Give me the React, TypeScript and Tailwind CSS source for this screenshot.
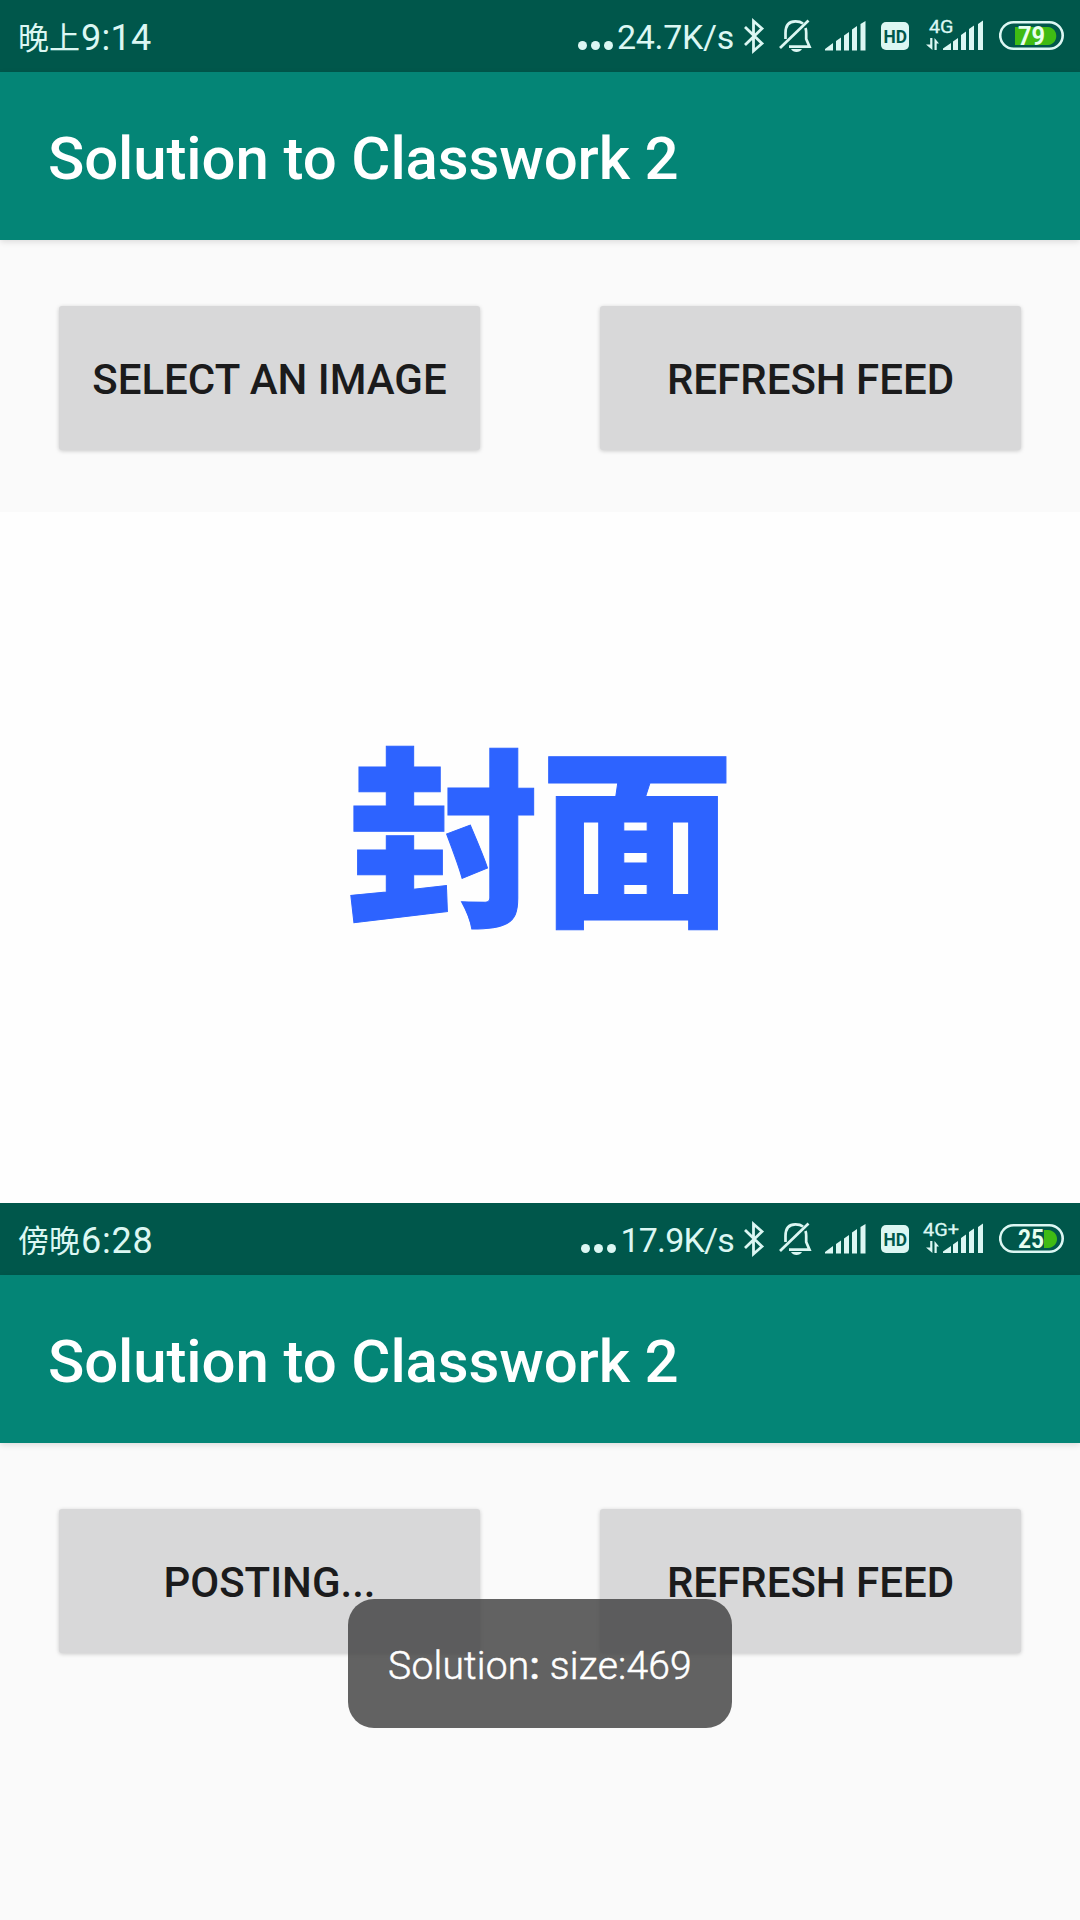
import React from "react";

function Bluetooth() {
  return (
    <svg className="ml-[9px] h-[72px] w-[22px] shrink-0" viewBox="0 0 22 72" fill="none" stroke="currentColor" strokeWidth="2.8">
      <path d="M2 27L19 43.5L10.5 51V21L19 28.5L2 45" />
    </svg>
  );
}

function MutedBell() {
  return (
    <svg className="ml-[14px] h-[72px] w-[34px] shrink-0" viewBox="0 0 34 72" fill="none" stroke="currentColor" strokeWidth="2.7">
      <path d="M6.500 39V33C6.500 25 10.500 21.300 16.500 21.300C19.500 21.300 22 22 24 23.500M26.500 28C27 29.500 27.200 31 27.200 33V39L30.500 46.700H10" />
      <path d="M1 48L29.500 20.500" />
      <path d="M12 49H23C21 53 14 53 12 49Z" fill="currentColor" stroke="none" />
    </svg>
  );
}

function Bars({ className }: { className: string }) {
  return (
    <svg className={className} viewBox="0 0 41 30" fill="currentColor">
      <path d="M0 29.500V28L8 22V29.500ZM11 20L16 16.500V29.500H11ZM19 14.500L24 11V29.500H19ZM27 8.500L32 5V29.500H27ZM35.500 3L40.500 0V29.500H35.500Z" />
    </svg>
  );
}

function Hd() {
  return (
    <svg className="ml-[15px] h-7 w-7 shrink-0" viewBox="0 0 28 28">
      <rect width="28" height="28" rx="5" fill="#dcf7f3" />
      <text x="2.500" y="20.500" fontFamily="Roboto" fontWeight="700" fontSize="18" textLength="23.500" lengthAdjust="spacingAndGlyphs" fill="#00574b">
        HD
      </text>
    </svg>
  );
}

function Mobile({ label }: { label: string }) {
  const plus = label.length > 2;
  return (
    <svg className="ml-[13px] h-[72px] w-[62px] shrink-0" viewBox="0 0 62 72" fill="currentColor">
      <text x={plus ? 1 : 7} y="33" fontFamily="Roboto" fontSize="18.500" textLength={plus ? 36 : 24.500} lengthAdjust="spacingAndGlyphs" stroke="currentColor" strokeWidth="0.300">
        {label}
      </text>
      <path d="M8.200 38H10.400V50L4 44.500H8.200ZM12.500 50V38L17 43.500H14.700V50Z" />
      <path d="M21 50V48.500L29 43V50ZM31 41.500L36 38V50H31ZM39 35L44 31.500V50H39ZM47 29L52 25.500V50H47ZM56 24L61 20.500V50H56Z" />
    </svg>
  );
}

function Battery({ level }: { level: string }) {
  const low = level === "25";
  return (
    <svg className="ml-[15px] h-[72px] w-[65px] shrink-0" viewBox="0 0 65 72">
      <rect x="1.200" y="22.200" width="62.500" height="26.600" rx="13.300" fill="none" stroke="#dcf7f3" strokeWidth="2.600" />
      {low ? (
        <path d="M45 27H49C61 28 61 44 49 45H45Z" fill="#3fbb13" />
      ) : (
        <path d="M16 27H49C60 28 60 44 49 45H16Z" fill="#3fbb13" />
      )}
      <text x={low ? 19 : 19} y="44.700" fontFamily="Roboto" fontWeight="700" fontSize="25.500" textLength={low ? 26 : 27} lengthAdjust="spacingAndGlyphs" fill="#e8fff0">
        {level}
      </text>
    </svg>
  );
}

interface StatusProps {
  period: string;
  time: string;
  timeClass: string;
  speed: string;
  speedClass: string;
  network: string;
  battery: string;
}

function StatusBar({ period, time, timeClass, speed, speedClass, network, battery }: StatusProps) {
  return (
    <header className="flex h-[72px] shrink-0 items-center bg-[#00574b] pr-[16px] pl-[18px] text-[#dcf7f3]">
      <div className="flex items-center leading-none whitespace-nowrap">
        <span className="mt-[-1px] font-['Noto_Sans_CJK_SC',sans-serif] text-[31px]">{period}</span>
        <span className={timeClass}>{time}</span>
      </div>
      <div className="ml-auto flex items-center">
        <div className="mt-[19px] mr-[4px] flex gap-[4px]">
          <i className="h-[9px] w-[9px] rounded-full bg-current" />
          <i className="h-[9px] w-[9px] rounded-full bg-current" />
          <i className="h-[9px] w-[9px] rounded-full bg-current" />
        </div>
        <span className={speedClass}>{speed}</span>
        <Bluetooth />
        <MutedBell />
        <Bars className="ml-[12px] h-[30px] w-[41px] shrink-0" />
        <Hd />
        <Mobile label={network} />
        <Battery level={battery} />
      </div>
    </header>
  );
}

function AppBar() {
  return (
    <div className="flex h-[168px] shrink-0 items-center bg-[#048576] pt-[5px] pl-[48px] shadow-[0_2px_6px_rgba(0,0,0,0.12)]">
      <h1 className="font-['Roboto'] text-[60px] leading-none font-medium tracking-[-0.13px] whitespace-nowrap text-white">
        Solution to Classwork 2
      </h1>
    </div>
  );
}

function ActionButton({ children }: { children: React.ReactNode }) {
  return (
    <button className="flex h-[144px] w-[421px] items-center justify-center rounded-[3px] bg-[#d8d8d9] pt-[4px] font-['Roboto'] text-[42px] leading-none font-medium whitespace-nowrap text-[#1b1b1c] shadow-[0_1px_4px_rgba(0,0,0,0.2)]">
      {children}
    </button>
  );
}

export default function App() {
  return (
    <div className="flex h-[1920px] w-[1080px] flex-col overflow-hidden bg-[#fafafa]">
      <section className="flex h-[1203px] shrink-0 flex-col">
        <StatusBar
          period="晚上"
          time="9:14"
          timeClass="mt-[3px] ml-[1px] font-['Roboto'] text-[36px] tracking-[0.3px]"
          speed="24.7K/s"
          speedClass="mt-[2px] font-['Roboto'] text-[34px] leading-none tracking-[-0.3px]"
          network="4G"
          battery="79"
        />
        <AppBar />
        <div className="flex h-[272px] shrink-0 justify-between px-[59px] pt-[66px]">
          <ActionButton>SELECT AN IMAGE</ActionButton>
          <ActionButton>REFRESH FEED</ActionButton>
        </div>
        <div className="flex flex-1 justify-center bg-[#fefefe] pt-[210px]">
          <span className="h-[210px] scale-x-[1.01] font-['Noto_Sans_CJK_SC',sans-serif] text-[192px] leading-[210px] font-black text-[#2d63ff] [-webkit-text-stroke:1px_#2d63ff]">
            封面
          </span>
        </div>
      </section>
      <section className="relative flex flex-1 flex-col">
        <StatusBar
          period="傍晚"
          time="6:28"
          timeClass="mt-[3px] ml-[1px] font-['Roboto'] text-[36px] tracking-[0.8px]"
          speed="17.9K/s"
          speedClass="mt-[2px] font-['Roboto'] text-[34px] leading-none tracking-[-0.8px]"
          network="4G+"
          battery="25"
        />
        <AppBar />
        <div className="flex justify-between px-[59px] pt-[66px]">
          <ActionButton>POSTING...</ActionButton>
          <ActionButton>REFRESH FEED</ActionButton>
        </div>
        <div className="absolute top-[396px] left-[348px] flex h-[129px] w-[384px] items-center justify-center rounded-[26px] bg-[rgba(70,70,70,0.85)] pt-[6px] font-['Roboto'] text-[39px] leading-none font-light tracking-[0.2px] whitespace-pre text-white [-webkit-text-stroke:0.5px_#ffffff]">
          <span>Solution</span>
          <span className="font-medium">: </span>
          <span>size:469</span>
        </div>
      </section>
    </div>
  );
}
